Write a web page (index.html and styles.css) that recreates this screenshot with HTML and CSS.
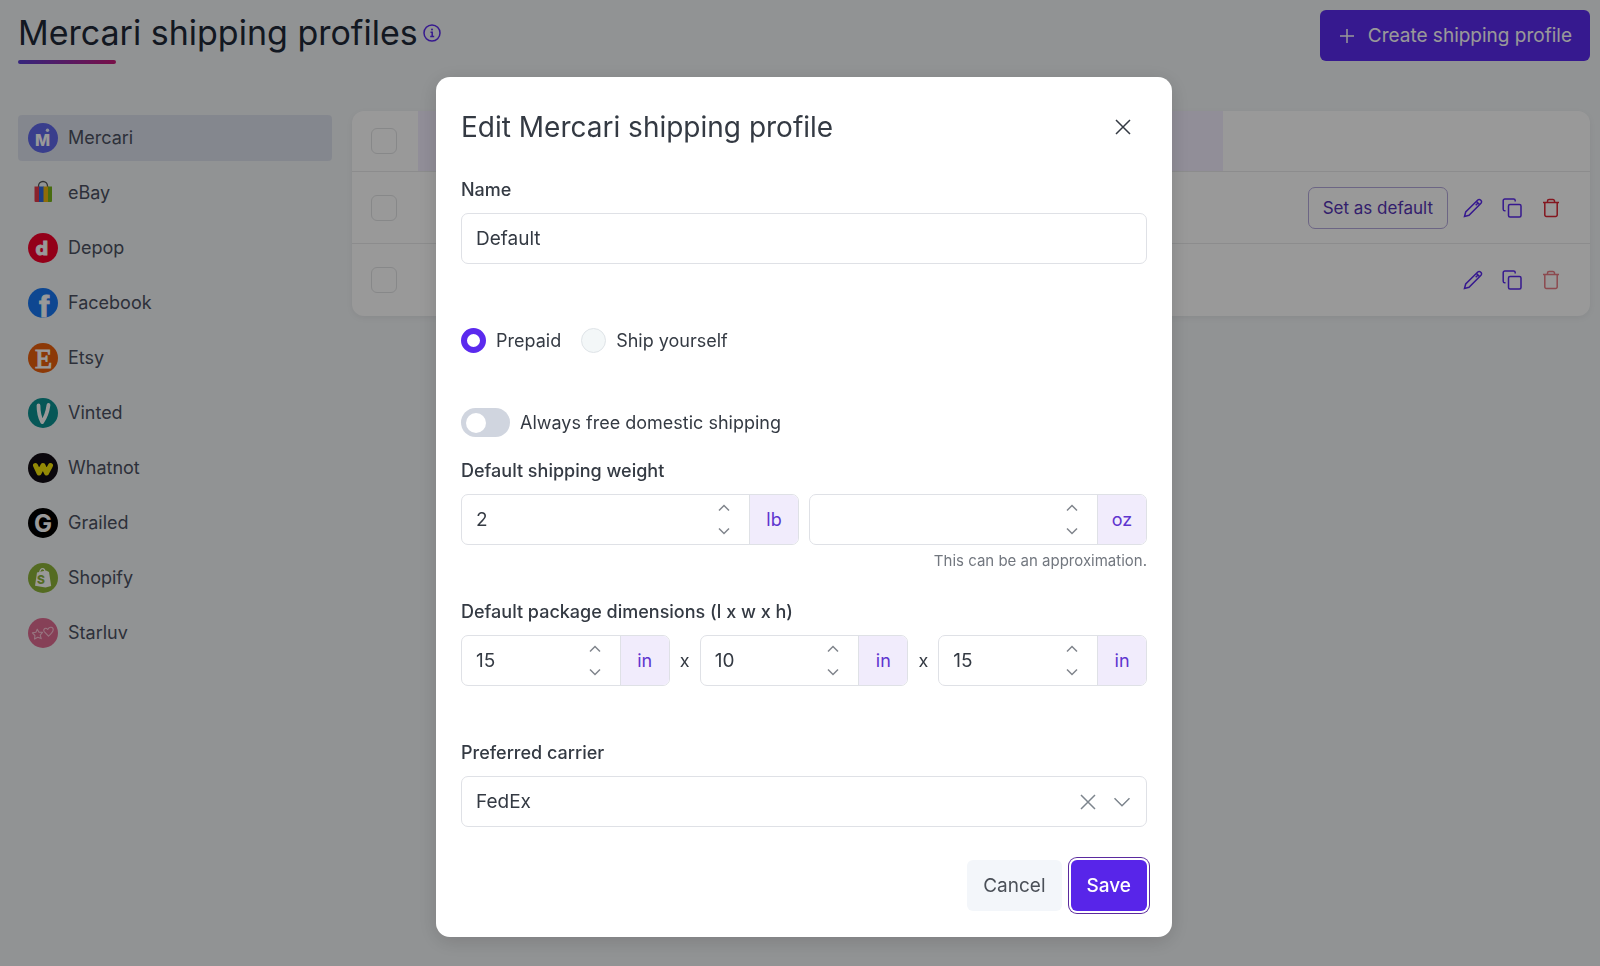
FILE: index.html
```html
<!DOCTYPE html>
<html lang="en">
<head>
    <meta charset="UTF-8">
    <meta name="viewport" content="width=device-width, initial-scale=1.0">
    <title>Mercari shipping profiles</title>
    <link rel="stylesheet" href="styles.css">
</head>
<body>
    <!-- Shared icons -->
    <svg class="sprite" aria-hidden="true">
        <symbol id="icon-pencil" viewBox="0 0 20 20">
            <path d="M1.500 18.500l1.200-4.500L14.800 2a1.900 1.900 0 0 1 2.700 0l.5.5a1.900 1.900 0 0 1 0 2.700L6 17.300z"/>
            <path d="M13.500 3.500l3 3M12.700 7.300l1.800-1.800"/>
        </symbol>
        <symbol id="icon-copy" viewBox="0 0 20 20">
            <rect x="6.500" y="6.500" width="12.500" height="12.500" rx="1.500"/>
            <path d="M3.500 12.800H2.800A1.600 1.600 0 0 1 1.200 11.200V2.600A1.600 1.600 0 0 1 2.800 1h8.800a1.600 1.600 0 0 1 1.600 1.600v.8"/>
        </symbol>
        <symbol id="icon-trash" viewBox="0 0 20 20">
            <path d="M2 4.500h16M3.800 4.500v12.500a1.500 1.500 0 0 0 1.500 1.500h9.400a1.500 1.500 0 0 0 1.500-1.500V4.500M6.500 4.500V3.100A1.600 1.600 0 0 1 8.100 1.500h3.800a1.600 1.600 0 0 1 1.600 1.600v1.400"/>
        </symbol>
        <symbol id="icon-close" viewBox="0 0 16 16">
            <path d="M1 1l14 14M15 1L1 15"/>
        </symbol>
        <symbol id="icon-up" viewBox="0 0 12 8">
            <path d="M1 6.500l5-5 5 5"/>
        </symbol>
        <symbol id="icon-down" viewBox="0 0 12 8">
            <path d="M1 1.500l5 5 5-5"/>
        </symbol>
    </svg>

    <header class="page-header">
        <div class="page-title">
            <h1>Mercari shipping profiles</h1>
            <svg class="info-icon" viewBox="0 0 18 18" role="img" aria-label="Info">
                <circle cx="9" cy="9" r="8"/>
                <path d="M7.500 8.200H9.200V12.500M7.200 12.500h4"/>
                <circle class="dot" cx="9" cy="5.500" r="1"/>
            </svg>
        </div>
        <button type="button" class="btn btn-create">
            <svg class="plus" viewBox="0 0 14 14" aria-hidden="true"><path d="M7 0v14M0 7h14"/></svg>
            Create shipping profile
        </button>
    </header>

    <main class="layout">
        <nav class="sidebar">
            <a href="#mercari" class="active">
                <svg class="logo" viewBox="0 0 30 30" aria-hidden="true">
                    <circle cx="15" cy="15" r="15" fill="#6068ea"/>
                    <text class="mark mark-m" x="14.500" y="23">M</text>
                    <circle cx="19.500" cy="7.300" r="1.700" fill="#e8eefc"/>
                </svg>
                Mercari
            </a>
            <a href="#ebay">
                <svg class="logo" viewBox="0 0 30 30" aria-hidden="true">
                    <path d="M10.500 10V8a4.500 4.500 0 0 1 9 0v2" fill="none" stroke="#555" stroke-width="1.300"/>
                    <path d="M6.500 8.500h5V24H7.500a1 1 0 0 1-1-1z" fill="#e5394a"/>
                    <path d="M11 8.500h5V24h-5z" fill="#2f66dc"/>
                    <path d="M15.500 8.500h5V24h-5z" fill="#eeb40e"/>
                    <path d="M20 8.500h4V23a1 1 0 0 1-1 1h-3z" fill="#79b51c"/>
                </svg>
                eBay
            </a>
            <a href="#depop">
                <svg class="logo" viewBox="0 0 30 30" aria-hidden="true">
                    <circle cx="15" cy="15" r="15" fill="#f6002b"/>
                    <text class="mark mark-d" x="14" y="22">d</text>
                </svg>
                Depop
            </a>
            <a href="#facebook">
                <svg class="logo" viewBox="0 0 30 30" aria-hidden="true">
                    <circle cx="15" cy="15" r="15" fill="#1877f2"/>
                    <text class="mark mark-f" x="16" y="29">f</text>
                </svg>
                Facebook
            </a>
            <a href="#etsy">
                <svg class="logo" viewBox="0 0 30 30" aria-hidden="true">
                    <circle cx="15" cy="15" r="15" fill="#e95f0c"/>
                    <text class="mark mark-e" x="15.500" y="24.500">E</text>
                </svg>
                Etsy
            </a>
            <a href="#vinted">
                <svg class="logo" viewBox="0 0 30 30" aria-hidden="true">
                    <circle cx="15" cy="15" r="15" fill="#0a9191"/>
                    <path d="M10.500 7.500c0 6 1.200 12 3.700 16.500M14.200 24c3-4 5.300-10 6.300-17" fill="none" stroke="#fff" stroke-width="3.800" stroke-linecap="round"/>
                </svg>
                Vinted
            </a>
            <a href="#whatnot">
                <svg class="logo" viewBox="0 0 30 30" aria-hidden="true">
                    <circle cx="15" cy="15" r="15" fill="#120c14"/>
                    <path d="M7.500 12.500l3.500 7.500 4-7.500 3.500 7.500 4-7.500" fill="none" stroke="#f5e40a" stroke-width="5" stroke-linecap="round" stroke-linejoin="round"/>
                </svg>
                Whatnot
            </a>
            <a href="#grailed">
                <svg class="logo" viewBox="0 0 30 30" aria-hidden="true">
                    <circle cx="15" cy="15" r="15" fill="#000"/>
                    <text class="mark mark-g" x="15" y="23.500">G</text>
                </svg>
                Grailed
            </a>
            <a href="#shopify">
                <svg class="logo" viewBox="0 0 30 30" aria-hidden="true">
                    <circle cx="15" cy="15" r="15" fill="#8db33a"/>
                    <path d="M9 9.500l9-2 3 1.500L23.200 23l-5.700 1.500L7 22.800z" fill="#fff"/>
                    <path d="M11.500 10c.5-3 2-4.500 3.500-4.300 1.500.3 2 2 2 3.800" fill="none" stroke="#fff" stroke-width="1.200"/>
                    <text class="mark mark-s" x="13" y="21">S</text>
                </svg>
                Shopify
            </a>
            <a href="#starluv">
                <svg class="logo" viewBox="0 0 30 30" aria-hidden="true">
                    <circle cx="15" cy="15" r="15" fill="#e06c92"/>
                    <path d="M9.300 11.200l1.700 3 3.500.2-2.300 2.700 1 3.500-3.400-1.300-3.200 1.800.3-3.600-2.500-2.600 3.500-.7zM20.500 18.200l-4.300-4.600c-1.500-2.200 1-4.800 3.600-2.200 1.300-3.300 5.600-2.700 5.400.4-.1 2-2.200 4.200-4.700 6.400z" fill="none" stroke="#fbc4d6" stroke-width="1.100" stroke-linejoin="round"/>
                </svg>
                Starluv
            </a>
        </nav>

        <table class="profiles">
            <thead>
                <tr>
                    <th class="check"><input type="checkbox" aria-label="Select all"></th>
                    <th class="sorted"></th>
                    <th></th>
                </tr>
            </thead>
            <tbody>
                <tr>
                    <td class="check"><input type="checkbox" aria-label="Select profile"></td>
                    <td></td>
                    <td>
                        <div class="actions">
                            <button type="button" class="btn-outline">Set as default</button>
                            <button type="button" class="icon-btn" aria-label="Edit"><svg><use href="#icon-pencil"/></svg></button>
                            <button type="button" class="icon-btn" aria-label="Duplicate"><svg><use href="#icon-copy"/></svg></button>
                            <button type="button" class="icon-btn danger" aria-label="Delete"><svg><use href="#icon-trash"/></svg></button>
                        </div>
                    </td>
                </tr>
                <tr>
                    <td class="check"><input type="checkbox" aria-label="Select profile"></td>
                    <td></td>
                    <td>
                        <div class="actions">
                            <button type="button" class="icon-btn" aria-label="Edit"><svg><use href="#icon-pencil"/></svg></button>
                            <button type="button" class="icon-btn" aria-label="Duplicate"><svg><use href="#icon-copy"/></svg></button>
                            <button type="button" class="icon-btn danger" aria-label="Delete" disabled><svg><use href="#icon-trash"/></svg></button>
                        </div>
                    </td>
                </tr>
            </tbody>
        </table>
    </main>

    <div class="overlay">
        <form class="modal" role="dialog" aria-labelledby="modalTitle">
            <div class="modal-header">
                <h2 id="modalTitle">Edit Mercari shipping profile</h2>
                <button type="button" class="close-btn" aria-label="Close"><svg><use href="#icon-close"/></svg></button>
            </div>

            <div class="field">
                <label for="name">Name</label>
                <div class="control">
                    <input type="text" id="name" value="Default">
                </div>
            </div>

            <div class="radios">
                <label><input type="radio" name="method" checked> Prepaid</label>
                <label><input type="radio" name="method"> Ship yourself</label>
            </div>

            <label class="switch"><input type="checkbox" role="switch"> Always free domestic shipping</label>

            <div class="field field-weight">
                <label for="weightLb">Default shipping weight</label>
                <div class="weights">
                    <div class="control">
                        <input type="number" id="weightLb" value="2">
                        <div class="stepper">
                            <button type="button" aria-label="Increase"><svg><use href="#icon-up"/></svg></button>
                            <button type="button" aria-label="Decrease"><svg><use href="#icon-down"/></svg></button>
                        </div>
                        <span class="unit">lb</span>
                    </div>
                    <div class="control">
                        <input type="number" id="weightOz" aria-label="Ounces">
                        <div class="stepper">
                            <button type="button" aria-label="Increase"><svg><use href="#icon-up"/></svg></button>
                            <button type="button" aria-label="Decrease"><svg><use href="#icon-down"/></svg></button>
                        </div>
                        <span class="unit">oz</span>
                    </div>
                </div>
                <p class="hint">This can be an approximation.</p>
            </div>

            <div class="field">
                <label for="length">Default package dimensions (l x w x h)</label>
                <div class="dimensions">
                    <div class="control">
                        <input type="number" id="length" value="15">
                        <div class="stepper">
                            <button type="button" aria-label="Increase"><svg><use href="#icon-up"/></svg></button>
                            <button type="button" aria-label="Decrease"><svg><use href="#icon-down"/></svg></button>
                        </div>
                        <span class="unit">in</span>
                    </div>
                    <span class="times">x</span>
                    <div class="control">
                        <input type="number" id="width" value="10" aria-label="Width">
                        <div class="stepper">
                            <button type="button" aria-label="Increase"><svg><use href="#icon-up"/></svg></button>
                            <button type="button" aria-label="Decrease"><svg><use href="#icon-down"/></svg></button>
                        </div>
                        <span class="unit">in</span>
                    </div>
                    <span class="times">x</span>
                    <div class="control">
                        <input type="number" id="height" value="15" aria-label="Height">
                        <div class="stepper">
                            <button type="button" aria-label="Increase"><svg><use href="#icon-up"/></svg></button>
                            <button type="button" aria-label="Decrease"><svg><use href="#icon-down"/></svg></button>
                        </div>
                        <span class="unit">in</span>
                    </div>
                </div>
            </div>

            <div class="field field-carrier">
                <label for="carrier">Preferred carrier</label>
                <div class="control">
                    <select id="carrier">
                        <option>FedEx</option>
                    </select>
                    <button type="button" class="clear-btn" aria-label="Clear"><svg><use href="#icon-close"/></svg></button>
                    <svg class="caret" aria-hidden="true"><use href="#icon-down"/></svg>
                </div>
            </div>

            <div class="modal-footer">
                <button type="button" class="btn btn-cancel">Cancel</button>
                <button type="submit" class="btn btn-save">Save</button>
            </div>
        </form>
    </div>
</body>
</html>
```
FILE: styles.css
```css
* {
    box-sizing: border-box;
}
body {
    margin: 0;
    min-height: 100vh;
    background-color: #f2f5f7;
    color: #343a43;
    font-family: Inter, sans-serif;
    font-size: 18px;
    line-height: 24px;
}
h1, h2, p {
    margin: 0;
}
h1, h2 {
    font-weight: 400;
}
button, input, select {
    font: inherit;
    color: inherit;
    margin: 0;
}
button {
    background: none;
    border: 0;
    padding: 0;
    cursor: pointer;
}
svg {
    display: block;
    fill: none;
    stroke: currentColor;
}
.sprite {
    position: absolute;
    width: 0;
    height: 0;
}
.btn {
    height: 51px;
    padding: 0 16px;
    border-radius: 6px;
    font-size: 19px;
}

/* Page behind the dialog */
.page-header {
    display: flex;
    justify-content: space-between;
    align-items: flex-start;
    padding: 10px 10px 0 18px;
}
.page-title {
    display: flex;
    align-items: center;
    gap: 5px;
}
h1 {
    color: #1f2937;
    font-size: 34px;
    line-height: 46px;
}
h1::after {
    content: "";
    display: block;
    width: 98px;
    height: 4px;
    margin-top: 4px;
    border-radius: 2px;
    background: linear-gradient(90deg, #5b3fd0, #c81a78);
}
.info-icon {
    width: 18px;
    height: 18px;
    margin-bottom: 8px;
    color: #5b2aee;
    stroke-width: 1.5;
}
.info-icon .dot {
    fill: currentColor;
    stroke: none;
}
.btn-create {
    display: flex;
    align-items: center;
    gap: 14px;
    padding: 0 18px 0 20px;
    background-color: #5b2aee;
    color: #fff;
}
.plus {
    width: 14px;
    height: 14px;
    stroke-width: 1.5;
}
.layout {
    display: flex;
    align-items: flex-start;
    gap: 20px;
    padding: 47px 10px 0 18px;
}
.sidebar {
    display: flex;
    flex-direction: column;
    flex: 0 0 314px;
    gap: 9px;
    padding-top: 4px;
}
.sidebar a {
    display: flex;
    align-items: center;
    gap: 10px;
    height: 46px;
    padding: 0 10px;
    border-radius: 4px;
    color: #4b5161;
    text-decoration: none;
}
.sidebar .active {
    background-color: #dde2ed;
}
.logo {
    width: 30px;
    height: 30px;
    stroke: none;
    overflow: visible;
}
.mark {
    fill: #fff;
    font-weight: 700;
    text-anchor: middle;
}
.mark-m {
    font: 800 16px Inter, sans-serif;
}
.mark-d {
    font: 700 18px "DejaVu Sans", sans-serif;
    stroke: #fff;
    stroke-width: 1;
}
.mark-f {
    font: 700 30px "Liberation Sans", sans-serif;
    stroke: #fff;
    stroke-width: 1;
}
.mark-e {
    font: 400 28px "Liberation Serif", serif;
    stroke: #fff;
    stroke-width: 1;
}
.mark-g {
    font: 700 24px Inter, sans-serif;
}
.mark-s {
    fill: #8db33a;
    font: 800 12px Inter, sans-serif;
}
.profiles {
    flex: 1;
    table-layout: fixed;
    border-collapse: separate;
    border-spacing: 0;
    border-radius: 12px;
    background-color: #fff;
    box-shadow: 0 2px 6px rgba(0, 0, 0, 0.06);
}
.profiles th, .profiles td {
    padding: 0;
    border-bottom: 1px solid #e9eaeb;
}
.profiles th {
    height: 61px;
}
.profiles td {
    height: 72px;
}
.profiles tr:last-child td {
    border-bottom: 0;
}
.profiles .check {
    width: 66px;
    padding-left: 19px;
}
.profiles .sorted {
    width: 65%;
    background-color: #f2edfe;
}
.profiles input {
    display: block;
    appearance: none;
    width: 26px;
    height: 26px;
    border: 1px solid #e2e3e5;
    border-radius: 6px;
}
.actions {
    display: flex;
    align-items: center;
    justify-content: flex-end;
    gap: 19px;
    padding-right: 29px;
    color: #5b2aee;
}
.btn-outline {
    height: 42px;
    padding: 0 14px;
    margin-right: -4px;
    border: 1px solid #b5a8dd;
    border-radius: 7px;
    color: #5634b5;
    font-size: 17px;
}
.icon-btn svg {
    width: 20px;
    height: 20px;
    stroke-width: 1.5;
}
.danger {
    color: #dc2634;
}
.danger:disabled {
    opacity: 0.6;
}

/* Dialog */
.overlay {
    position: fixed;
    inset: 0;
    display: flex;
    justify-content: center;
    align-items: flex-start;
    padding: 77px 0 0 8px;
    background-color: rgba(0, 0, 0, 0.4);
    overflow: auto;
}
.modal {
    display: flex;
    flex-direction: column;
    width: 100%;
    max-width: 736px;
    padding: 26px 25px;
    border-radius: 14px;
    background-color: #fff;
    box-shadow: 0 4px 20px rgba(0, 0, 0, 0.15);
}
.modal-header {
    display: flex;
    align-items: center;
    justify-content: space-between;
    height: 48px;
    padding-right: 16px;
    margin-bottom: 27px;
}
h2 {
    font-size: 28px;
    line-height: 36px;
}
.close-btn svg {
    width: 16px;
    height: 16px;
    stroke-width: 1.5;
}
.field {
    display: flex;
    flex-direction: column;
    gap: 11px;
}
.field > label {
    font-weight: 500;
}
.control {
    display: flex;
    align-items: center;
    flex: 1;
    min-width: 0;
    height: 51px;
    border: 1px solid #dfe1e6;
    border-radius: 7px;
    overflow: hidden;
}
.field > .control {
    flex: none;
}
.control input, .control select {
    flex: 1;
    min-width: 0;
    height: 49px;
    padding: 0 14px;
    border: 0;
    outline: 0;
    background: none;
    appearance: none;
    font-size: 19px;
}
.control input[type="number"] {
    appearance: textfield;
}
.stepper {
    display: flex;
    flex-direction: column;
    gap: 15px;
    padding: 0 19px;
    color: #80858c;
}
.stepper svg {
    width: 12px;
    height: 8px;
    stroke-width: 1.5;
}
.unit {
    display: flex;
    align-items: center;
    justify-content: center;
    width: 49px;
    height: 100%;
    border-left: 1px solid #dfe1e6;
    background-color: #f1ecfc;
    color: #5f35cf;
}
.radios {
    display: flex;
    gap: 20px;
    margin-top: 64px;
}
.radios label, .switch {
    display: flex;
    align-items: center;
    gap: 10px;
}
.radios input {
    appearance: none;
    width: 25px;
    height: 25px;
    border: 1px solid #dfe4e8;
    border-radius: 50%;
    background-color: #f3f7f8;
}
.radios input:checked {
    border: 6px solid #5b2aee;
    background-color: #fff;
}
.switch {
    align-self: flex-start;
    margin-top: 55px;
}
.switch input {
    display: flex;
    align-items: center;
    appearance: none;
    width: 49px;
    height: 29px;
    padding: 0 5px;
    border-radius: 15px;
    background-color: #d0d5df;
}
.switch input::before {
    content: "";
    width: 20px;
    height: 20px;
    border-radius: 50%;
    background-color: #fff;
}
.field-weight {
    margin: 22px 0 28px;
}
.weights {
    display: flex;
    gap: 10px;
}
.hint {
    margin-top: -6px;
    color: #72777f;
    font-size: 15px;
    line-height: 22px;
    text-align: right;
}
.dimensions {
    display: flex;
    align-items: center;
}
.times {
    width: 30px;
    text-align: center;
}
.field-carrier {
    margin-top: 55px;
}
.clear-btn, .caret {
    color: #7d858d;
}
.clear-btn svg {
    width: 16px;
    height: 16px;
    stroke-width: 1.5;
}
.caret {
    width: 18px;
    height: 12px;
    margin: 0 15px 0 17px;
}
.modal-footer {
    display: flex;
    justify-content: flex-end;
    gap: 9px;
    margin-top: 33px;
}
.btn-cancel {
    background-color: #f3f6fa;
    color: #4b5058;
}
.btn-save {
    background-color: #5825e9;
    color: #fff;
    font-weight: 500;
    box-shadow: 0 0 0 2px #fff, 0 0 0 3px #5b2a9e;
}
```
